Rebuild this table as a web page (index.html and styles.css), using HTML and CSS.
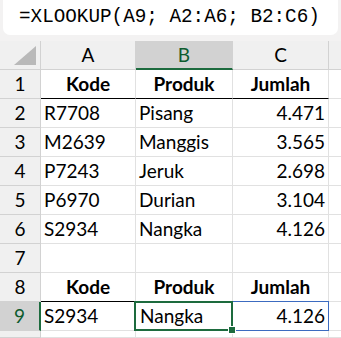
FILE: index.html
```html
<!DOCTYPE html>
<html>
<head>
<meta charset="utf-8">
<link rel="stylesheet" href="styles.css">
</head>
<body>
<div class="top">
  <div class="formula">=XLOOKUP(A9; A2:A6; B2:C6)</div>
</div>
<div class="sheet">
  <div class="ch corner"><svg class="tri" width="22" height="19" viewBox="0 0 22 19"><polygon points="22,0 22,19 0,19" fill="#b9b9b9"/></svg></div>
  <div class="ch">A</div>
  <div class="ch sel-col">B</div>
  <div class="ch">C</div>
  <div class="ch last"></div>

  <div class="rh">1</div>
  <div class="c ctr b hb">Kode</div>
  <div class="c ctr b hb">Produk</div>
  <div class="c ctr b hb">Jumlah</div>
  <div class="c last"></div>

  <div class="rh">2</div>
  <div class="c">R7708</div>
  <div class="c">Pisang</div>
  <div class="c num">4.471</div>
  <div class="c last"></div>

  <div class="rh">3</div>
  <div class="c">M2639</div>
  <div class="c">Manggis</div>
  <div class="c num">3.565</div>
  <div class="c last"></div>

  <div class="rh">4</div>
  <div class="c">P7243</div>
  <div class="c">Jeruk</div>
  <div class="c num">2.698</div>
  <div class="c last"></div>

  <div class="rh">5</div>
  <div class="c">P6970</div>
  <div class="c">Durian</div>
  <div class="c num">3.104</div>
  <div class="c last"></div>

  <div class="rh">6</div>
  <div class="c">S2934</div>
  <div class="c">Nangka</div>
  <div class="c num">4.126</div>
  <div class="c last"></div>

  <div class="rh">7</div>
  <div class="c"></div>
  <div class="c"></div>
  <div class="c"></div>
  <div class="c last"></div>

  <div class="rh">8</div>
  <div class="c ctr b hb">Kode</div>
  <div class="c ctr b hb">Produk</div>
  <div class="c ctr b hb">Jumlah</div>
  <div class="c last"></div>

  <div class="rh sel-row">9</div>
  <div class="c">S2934</div>
  <div class="c active">Nangka<span class="handle"></span></div>
  <div class="c num spill">4.126</div>
  <div class="c last"></div>

  <div class="rh"></div>
  <div class="c"></div>
  <div class="c"></div>
  <div class="c"></div>
  <div class="c last"></div>
</div>
</body>
</html>
```

FILE: styles.css
```css
html, body {
  margin: 0;
  padding: 0;
}
body {
  width: 341px;
  height: 338px;
  overflow: hidden;
  background: #f3f2f2;
  font-family: Lato, "Open Sans", sans-serif;
  font-size: 19px;
  color: #000;
}
.top {
  padding: 0 3px 6px 3px;
  height: 35px;
}
.formula {
  height: 35px;
  background: #fff;
  border-radius: 0 0 7px 7px;
  padding-left: 16px;
  font-family: "Liberation Mono", "DejaVu Sans Mono", monospace;
  font-size: 19.3px;
  line-height: 35px;
  color: #000;
  white-space: nowrap;
  box-sizing: border-box;
}
.sheet {
  display: grid;
  grid-template-columns: 41px 95px 97px 96px 12px;
  grid-template-rows: repeat(10, 29px) 1fr;
  height: 297px;
  background: #fff;
}
.sheet > div {
  box-sizing: border-box;
  line-height: 28px;
  white-space: nowrap;
  overflow: visible;
}
.ch {
  background: #f0f0f0;
  border-right: 1px solid #d2d2d2;
  border-bottom: 1px solid #d2d2d2;
  text-align: center;
  color: #000;
}
.corner {
  position: relative;
}
.tri {
  position: absolute;
  right: 4px;
  bottom: 4px;
}
.sel-col {
  background: #d2d2d2;
  color: #0e5c2f;
  border-bottom: 2px solid #1d6b3e;
}
.rh {
  background: #f0f0f0;
  border-right: 1px solid #d2d2d2;
  border-bottom: 1px solid #d2d2d2;
  text-align: center;
  color: #000;
}
.sel-row {
  background: #d2d2d2;
  color: #0e5c2f;
  border-right: 2px solid #1d6b3e;
}
.c {
  border-right: 1px solid #e1e1e1;
  border-bottom: 1px solid #e1e1e1;
  padding-left: 3px;
  background: #fff;
}
.ctr {
  text-align: center;
  padding-left: 0;
}
.b {
  font-weight: bold;
}
.hb {
  border-bottom: 1px solid #000;
}
.num {
  text-align: right;
  padding-left: 0;
  padding-right: 3px;
}
.last {
  border-right: none;
}
.active {
  position: relative;
  padding-left: 4px;
}
.active::after {
  content: "";
  position: absolute;
  left: -2px;
  top: -1px;
  right: -1px;
  bottom: -1px;
  border: 2px solid #1d6b3e;
  z-index: 2;
}
.handle {
  position: absolute;
  right: -4px;
  bottom: -4px;
  width: 6px;
  height: 6px;
  background: #1d6b3e;
  border: 1px solid #fff;
  z-index: 3;
}
.spill {
  position: relative;
}
.spill::after {
  content: "";
  position: absolute;
  left: -1px;
  top: -1px;
  right: -1px;
  bottom: -1px;
  border: 1px solid #3c6bc0;
  z-index: 1;
}
```
